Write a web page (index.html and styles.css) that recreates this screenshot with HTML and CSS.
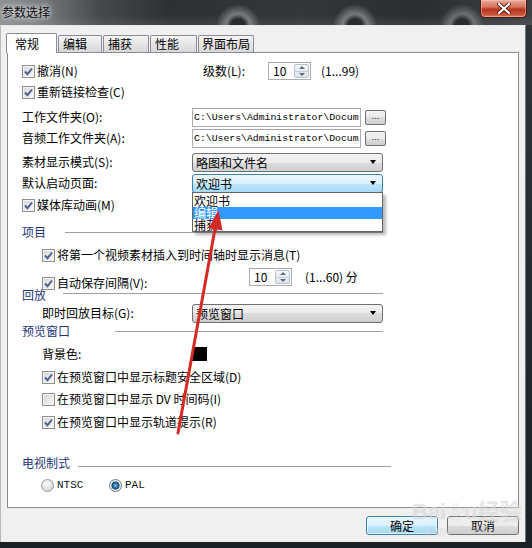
FILE: index.html
```html
<!DOCTYPE html>
<html lang="zh-CN">
<head>
<meta charset="utf-8">
<title>参数选择</title>
<link rel="stylesheet" href="styles.css">
</head>
<body>
<div class="window">
  <div class="titlebar">
    <span class="title">参数选择</span>
    <span class="close">
      <svg width="14" height="11" viewBox="0 0 14 11"><path d="M2 1 L12 10 M12 1 L2 10" stroke="#5a1a10" stroke-width="4" stroke-linecap="round"/><path d="M2 1 L12 10 M12 1 L2 10" stroke="#fff" stroke-width="2.2" stroke-linecap="round"/></svg>
    </span>
  </div>
  <div class="client">
    <div class="tabs">
      <div class="tab active t1">常规</div>
      <div class="tab t2">编辑</div>
      <div class="tab t3">捕获</div>
      <div class="tab t4">性能</div>
      <div class="tab t5">界面布局</div>
    </div>
    <div class="panel">
      <div class="row">
        <div class="lbl-col">
          <span class="check"><span class="box"><svg class="tick" viewBox="0 0 9 9"><path d="M1 4.5 L3.5 7.2 L8 1.5"/></svg></span><span>撤消(N)</span></span>
        </div>
        <span class="level-lbl">级数(L):</span>
        <div class="spin"><span class="spin-val">10</span><span class="spin-btns"><i class="up"></i><i class="dn"></i></span></div>
        <span class="range">(1...99)</span>
      </div>
      <div class="row g9">
        <span class="check"><span class="box"><svg class="tick" viewBox="0 0 9 9"><path d="M1 4.5 L3.5 7.2 L8 1.5"/></svg></span><span>重新链接检查(C)</span></span>
      </div>
      <div class="row g13">
        <span class="lbl-col">工作文件夹(O):</span>
        <div class="path">C:\Users\Administrator\Docum</div>
        <span class="browse">...</span>
      </div>
      <div class="row g9">
        <span class="lbl-col">音频工作文件夹(A):</span>
        <div class="path">C:\Users\Administrator\Docum</div>
        <span class="browse">...</span>
      </div>
      <div class="row g12">
        <span class="lbl-col">素材显示模式(S):</span>
        <div class="select"><span>略图和文件名</span><i class="caret"></i></div>
      </div>
      <div class="row g9">
        <span class="lbl-col">默认启动页面:</span>
        <div class="select-wrap">
          <div class="select focus"><span>欢迎书</span><i class="caret"></i></div>
          <ul class="dropdown">
            <li>欢迎书</li>
            <li class="hl">编辑</li>
            <li>捕获</li>
          </ul>
        </div>
      </div>
      <div class="row g10">
        <span class="check"><span class="box"><svg class="tick" viewBox="0 0 9 9"><path d="M1 4.5 L3.5 7.2 L8 1.5"/></svg></span><span>媒体库动画(M)</span></span>
      </div>
      <div class="row g15">
        <span class="group-lbl">项目</span><span class="sep sep-proj"></span>
      </div>
      <div class="row g11 indent">
        <span class="check"><span class="box"><svg class="tick" viewBox="0 0 9 9"><path d="M1 4.5 L3.5 7.2 L8 1.5"/></svg></span><span>将第一个视频素材插入到时间轴时显示消息(T)</span></span>
      </div>
      <div class="row g16 indent">
        <div class="auto-col">
          <span class="check"><span class="box"><svg class="tick" viewBox="0 0 9 9"><path d="M1 4.5 L3.5 7.2 L8 1.5"/></svg></span><span>自动保存间隔(V):</span></span>
        </div>
        <div class="spin raised"><span class="spin-val">10</span><span class="spin-btns"><i class="up"></i><i class="dn"></i></span></div>
        <span class="range range2">(1...60) 分</span>
      </div>
      <div class="row">
        <span class="group-lbl">回放</span><span class="sep sep-play"></span>
      </div>
      <div class="row g6 indent">
        <span class="lbl-col2">即时回放目标(G):</span>
        <div class="select"><span>预览窗口</span><i class="caret"></i></div>
      </div>
      <div class="row g6">
        <span class="group-lbl">预览窗口</span><span class="sep sep-prev"></span>
      </div>
      <div class="row g11 indent">
        <span class="lbl-col2">背景色:</span>
        <span class="swatch"></span>
      </div>
      <div class="row g11 indent">
        <span class="check"><span class="box"><svg class="tick" viewBox="0 0 9 9"><path d="M1 4.5 L3.5 7.2 L8 1.5"/></svg></span><span>在预览窗口中显示标题安全区域(D)</span></span>
      </div>
      <div class="row g10 indent">
        <span class="check"><span class="box"></span><span>在预览窗口中显示 DV 时间码(I)</span></span>
      </div>
      <div class="row g11 indent">
        <span class="check"><span class="box"><svg class="tick" viewBox="0 0 9 9"><path d="M1 4.5 L3.5 7.2 L8 1.5"/></svg></span><span>在预览窗口中显示轨道提示(R)</span></span>
      </div>
      <div class="row g29">
        <span class="group-lbl tv-lbl">电视制式</span><span class="sep sep-tv"></span>
      </div>
      <div class="row g10 radios">
        <span class="radio-item ntsc"><span class="radio"></span><span class="mono">NTSC</span></span>
        <span class="radio-item"><span class="radio on"></span><span class="mono">PAL</span></span>
      </div>
    </div>
    <div class="actions">
      <span class="btn default">确定</span>
      <span class="btn">取消</span>
    </div>
  </div>
</div>
<svg class="arrow" width="532" height="548" viewBox="0 0 532 548">
  <line x1="178" y1="433" x2="215.5" y2="226" stroke="#d42a24" stroke-width="3" stroke-linecap="round"/>
  <polygon points="218.5,210 222.5,230.5 208.5,228" fill="#d42a24"/>
</svg>
<div class="watermark">
  <span class="wm-big">Bai<span class="wm-paw">❀</span>u经验</span>
  <span class="wm-small">jingyan.baidu.com</span>
</div>
</body>
</html>
```

FILE: styles.css
```css
* { box-sizing: border-box; }
html, body { margin: 0; padding: 0; }
body {
  width: 532px;
  height: 548px;
  overflow: hidden;
  position: relative;
  background: linear-gradient(to bottom, #30353a, #1c2125);
  font-family: "Noto Sans CJK SC", "Noto Sans", sans-serif;
  font-size: 12px;
  color: #000;
}

.window { width: 532px; }

.titlebar {
  height: 25px;
  display: flex;
  justify-content: space-between;
  align-items: flex-start;
  background:
    radial-gradient(circle at 238px 26px, rgba(40,44,47,1) 0, rgba(40,44,47,1) 7px, rgba(175,180,185,.55) 12px, rgba(175,180,185,0) 22px),
    radial-gradient(circle at 355px 26px, rgba(40,44,47,1) 0, rgba(40,44,47,1) 7px, rgba(175,180,185,.55) 12px, rgba(175,180,185,0) 22px),
    radial-gradient(circle at 462px 26px, rgba(40,44,47,1) 0, rgba(40,44,47,1) 7px, rgba(175,180,185,.45) 12px, rgba(175,180,185,0) 22px),
    linear-gradient(to bottom, rgba(255,255,255,0) 60%, rgba(255,255,255,.08) 100%),
    linear-gradient(to right, #8c9093 0, #74787b 45px, #45494c 100px, #2d3134 170px, #33373a 300px, #2a2e31 420px, #3d4144 532px);
}
.title {
  padding: 5px 0 0 2px;
  line-height: 14px;
  font-size: 12px;
  color: #0c0c0c;
  text-shadow: 0 0 5px #fff, 0 0 9px rgba(255,255,255,.8);
}
.close {
  width: 47px;
  height: 18px;
  margin-right: 5px;
  border: 1px solid #4a1a12;
  border-top: none;
  border-radius: 0 0 5px 5px;
  background: linear-gradient(to bottom, #eaa99a 0, #d77460 40%, #b8361f 55%, #c9533a 85%, #dd7b5f 100%);
  box-shadow: inset 0 0 0 1px rgba(255,210,200,.45);
  display: flex;
  align-items: center;
  justify-content: center;
}

.client {
  width: 526px;
  height: 517px;
  background: #f0f0f0;
  border-top: 1px solid #e8eaec;
  border-left: 1px solid #b6babd;
  border-right: 1px solid #6e7478;
  padding: 7px 6px 0 6px;
  display: flex;
  flex-direction: column;
}

.tabs {
  display: flex;
  align-items: flex-end;
  height: 20px;
  margin-left: -1px;
  gap: 1px;
}
.tab {
  height: 17px;
  margin-bottom: 1px;
  border: 1px solid #898c95;
  border-bottom: none;
  border-radius: 2px 2px 0 0;
  background: linear-gradient(to bottom, #f4f4f4, #e6e6e6 50%, #d8d8d8);
  padding-left: 4px;
  line-height: 16px;
  white-space: nowrap;
}
.tab.active {
  height: 20px;
  margin-bottom: 0;
  background: #fff;
  padding-left: 8px;
  line-height: 20px;
  position: relative;
  z-index: 1;
}
.t1 { width: 51px; }
.t2 { width: 44px; }
.t3 { width: 46px; }
.t4 { width: 47px; }
.t5 { width: 56px; padding-left: 3px; }

.panel {
  margin-top: -1px;
  width: 512px;
  height: 456px;
  background: #fff;
  border: 1px solid #898c95;
  padding: 12px 0 0 14px;
}

.row {
  display: flex;
  align-items: center;
  height: 12px;
  line-height: 12px;
  white-space: nowrap;
}
.indent { padding-left: 20px; }
.g6 { margin-top: 6px; }
.g9 { margin-top: 9px; }
.g10 { margin-top: 10px; }
.g11 { margin-top: 11px; }
.g12 { margin-top: 12px; }
.g13 { margin-top: 13px; }
.g15 { margin-top: 15px; }
.g16 { margin-top: 16px; }
.g29 { margin-top: 29px; }

.lbl-col { width: 170px; flex: none; display: flex; align-items: center; }
.lbl-col2 { width: 150px; flex: none; }
.auto-col { width: 207px; flex: none; display: flex; align-items: center; }

.check { display: flex; align-items: center; gap: 2px; }
.box {
  width: 13px;
  height: 13px;
  flex: none;
  border: 1px solid #8e8f8f;
  background: linear-gradient(135deg, #d6d6d6, #f8f8f8);
  box-shadow: inset 0 0 0 1px #f2f2f2;
  display: flex;
  align-items: center;
  justify-content: center;
}
.tick { width: 9px; height: 9px; }
.tick path { fill: none; stroke: #4d5f8c; stroke-width: 1.9; }

.level-lbl { margin-left: 11px; width: 65px; flex: none; }

.spin {
  width: 43px;
  height: 18px;
  flex: none;
  display: flex;
  border: 1px solid #abadb3;
  border-top-color: #a2a5ab;
  background: #fff;
}
.spin.raised { align-self: flex-start; margin-top: -9px; }
.spin-val { flex: 1; padding-left: 4px; line-height: 16px; }
.spin-btns {
  width: 15px;
  margin: 1px;
  display: flex;
  flex-direction: column;
  border: 1px solid #b9c2cc;
  border-radius: 2px;
  background: linear-gradient(to bottom, #f4f6f8, #dfe4ea);
}
.spin-btns i {
  flex: 1;
  display: flex;
  align-items: center;
  justify-content: center;
}
.spin-btns i::before {
  content: "";
  border-left: 3px solid transparent;
  border-right: 3px solid transparent;
}
.spin-btns .up { border-bottom: 1px solid #c6ced7; }
.spin-btns .up::before { border-bottom: 3px solid #5b6a7c; }
.spin-btns .dn::before { border-top: 3px solid #5b6a7c; }

.range { margin-left: 10px; }
.range2 { margin-left: 13px; align-self: flex-start; margin-top: -6px; }

.path {
  width: 169px;
  height: 19px;
  flex: none;
  border: 1px solid #abadb3;
  border-top-color: #9ea2a9;
  background: #fff;
  font-family: "Liberation Mono", monospace;
  font-size: 9.8px;
  line-height: 17px;
  padding-left: 1px;
  overflow: hidden;
  white-space: nowrap;
}
.browse {
  margin-left: 4px;
  width: 21px;
  height: 15px;
  flex: none;
  border: 1px solid #707070;
  border-radius: 2px;
  background: linear-gradient(to bottom, #f2f2f2, #ebebeb 50%, #dddddd 50%, #cfcfcf);
  font-family: "Liberation Sans", sans-serif;
  font-size: 9px;
  line-height: 11px;
  text-align: center;
  color: #222;
}

.select-wrap { position: relative; }
.select {
  width: 191px;
  height: 19px;
  flex: none;
  border: 1px solid #707070;
  border-radius: 3px;
  background: linear-gradient(to bottom, #f2f2f2, #ebebeb 50%, #dddddd 50%, #cfcfcf);
  display: flex;
  align-items: center;
  justify-content: space-between;
  padding: 0 6px 0 3px;
  line-height: 17px;
}
.select.focus {
  border-color: #3c7fb1;
  background: linear-gradient(to bottom, #eaf6fd, #d9f0fc 50%, #bee6fd 50%, #a7d9f5);
}
.caret {
  width: 0;
  height: 0;
  border-left: 3.5px solid transparent;
  border-right: 3.5px solid transparent;
  border-top: 4px solid #000;
}
.dropdown {
  position: absolute;
  top: 18px;
  left: 0;
  width: 191px;
  margin: 0;
  padding: 2px 0 0 0;
  list-style: none;
  background: #fff;
  border: 1px solid #646464;
  box-shadow: 3px 3px 3px rgba(0,0,0,.28);
  z-index: 2;
}
.dropdown li {
  height: 12px;
  line-height: 12px;
  padding-left: 1px;
}
.dropdown li.hl { background: #3399ff; color: #fff; }

.group-lbl { color: #1c3577; flex: none; }
.sep { height: 1px; background: #a0a0a0; flex: none; }
.sep-proj { margin-left: 19px; width: 318px; }
.sep-play { margin-left: 17px; width: 320px; margin-top: -4px; }
.sep-prev { margin-left: 45px; width: 268px; }
.sep-tv { margin-left: 8px; width: 313px; margin-top: 6px; }
.tv-lbl { background: #fff; }

.swatch { width: 15px; height: 14px; background: #000; flex: none; }

.radios { padding-left: 19px; }
.radio-item { display: flex; align-items: center; gap: 3px; }
.radio-item.ntsc { width: 68px; }
.radio {
  width: 13px;
  height: 13px;
  border-radius: 50%;
  border: 1px solid #9a9a9a;
  background: radial-gradient(circle at 40% 35%, #ffffff 0, #e9e9e9 40%, #c8c8c8 100%);
  flex: none;
}
.radio.on {
  border-color: #6d7d8c;
  background: radial-gradient(circle at 50% 50%, #7fc3ee 0, #2f7cb5 2px, #1b4767 3.6px, #dcdcdc 4.4px, #f4f4f4 5.5px);
}
.mono { font-family: "Liberation Mono", monospace; font-size: 11px; color: #111; }

.actions {
  display: flex;
  justify-content: flex-end;
  gap: 9px;
  margin-top: 8px;
}
.btn {
  width: 72px;
  height: 19px;
  border: 1px solid #707070;
  border-radius: 3px;
  background: linear-gradient(to bottom, #f2f2f2, #ebebeb 50%, #dddddd 50%, #cfcfcf);
  text-align: center;
  line-height: 17px;
}
.btn.default {
  border-color: #3c7fb1;
  background: linear-gradient(to bottom, #eaf6fd, #d9f0fc 50%, #bee6fd 50%, #a7d9f5);
  box-shadow: inset 0 0 0 1px rgba(255,255,255,.6);
}

.arrow { position: absolute; left: 0; top: 0; pointer-events: none; z-index: 5; }

.watermark {
  position: absolute;
  left: 412px;
  top: 500px;
  display: flex;
  flex-direction: column;
  align-items: center;
  pointer-events: none;
  z-index: 4;
  color: rgba(255,255,255,.4);
  text-shadow: 0 0 1px rgba(150,150,150,.4);
}
.wm-big { font-family: "Liberation Sans", "Noto Sans CJK SC", sans-serif; font-size: 22px; font-weight: bold; line-height: 24px; }
.wm-paw { font-size: 18px; }
.wm-small { font-family: "Liberation Sans", sans-serif; font-size: 10px; line-height: 12px; }
```
